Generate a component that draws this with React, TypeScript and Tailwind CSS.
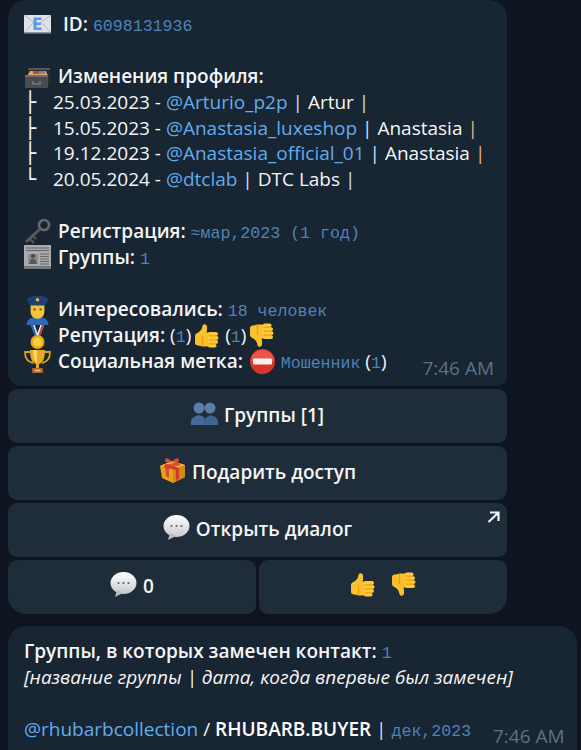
import type { ReactNode } from "react";

function Emoji({ children, className = "" }: { children: ReactNode; className?: string }) {
  return (
    <svg viewBox="0 0 27 27" className={`inline-block w-[27px] h-[27px] shrink-0 align-middle -mt-[3px] ${className}`}>
      {children}
    </svg>
  );
}

const Envelope = () => (
  <Emoji>
    <rect x="0" y="4" width="27" height="18" fill="#dfe3e8" />
    <path d="M0 4l13.500 10L27 4M0 22l9-10M27 22l-9-10" fill="none" stroke="#aeb6be" strokeWidth="1" />
    <rect x="0" y="21" width="27" height="1.500" fill="#8f979f" />
    <path d="M9.500 6.500h8v2.500h-5v2.500h4.500v2.500h-4.500V16.500h5V19h-8z" fill="#5b9be8" />
  </Emoji>
);

const Cabinet = () => (
  <Emoji>
    <path d="M4 5h22v15l-3 4V9H4z" fill="#2b2c30" />
    <path d="M4 5h22v2H4z" fill="#55565b" />
    <path d="M3 13l3-5h16l2 5z" fill="#e0a860" />
    <path d="M9 8h6v3H9z" fill="#c6493c" />
    <path d="M15 8h6v3h-6z" fill="#6a8bb0" />
    <rect x="1" y="12" width="23" height="13" rx="1" fill="#4a4b50" />
    <rect x="1" y="12" width="23" height="2" fill="#6c6d72" />
    <path d="M9 18v3h7v-3" fill="none" stroke="#86878c" strokeWidth="1.200" />
  </Emoji>
);

const Key = () => (
  <Emoji>
    <circle cx="20" cy="7" r="5" fill="none" stroke="#6b6a68" strokeWidth="2.600" />
    <path d="M16 11L2 24" stroke="#5b5a58" strokeWidth="3" />
    <path d="M6 21l4 4M9 18l3 3" stroke="#55544f" strokeWidth="2.400" />
  </Emoji>
);

const Newspaper = () => (
  <Emoji>
    <rect x="0" y="1" width="27" height="24" fill="#a9abad" />
    <rect x="0" y="22" width="27" height="3" fill="#77797b" />
    <path d="M2 4h23M2 6.500h23" stroke="#5f6163" strokeWidth="1.200" />
    <rect x="4" y="10" width="10" height="10" fill="#8b8d8f" />
    <circle cx="9" cy="12" r="2.200" fill="#4b4d4f" />
    <path d="M5 20l2-5h4l2 5z" fill="#55575a" />
    <path d="M16 10h9M16 12.500h9M16 15h9M16 17.500h9M16 20h9" stroke="#66686a" strokeWidth="1" />
  </Emoji>
);

const Police = () => (
  <Emoji className="scale-[1.15]">
    <path d="M4 27c0-5 4-7 9.500-7s9.500 2 9.500 7z" fill="#2f6ab0" />
    <path d="M7.500 8h12v7c0 4-2.500 6.500-6 6.500s-6-2.500-6-6.500z" fill="#f6c43a" />
    <path d="M4 5c3-4 16-5 19 0l-3 5H7z" fill="#1d3f78" />
    <circle cx="13.500" cy="5" r="1.500" fill="#e7b93a" />
    <rect x="10" y="12.500" width="1.800" height="1.800" fill="#6a4a10" />
    <rect x="15.300" y="12.500" width="1.800" height="1.800" fill="#6a4a10" />
  </Emoji>
);

const Medal = () => (
  <Emoji>
    <path d="M6 1l6 15h3L21 1h-4l-3.500 10L10 1z" fill="#e9edf0" />
    <path d="M6 1l6 15h1.500L8.500 1z" fill="#2e5ea8" />
    <path d="M21 1l-6 15h-1.500L18.500 1z" fill="#cf3a34" />
    <circle cx="13.500" cy="20" r="7" fill="#e7aa17" />
    <circle cx="13.500" cy="20" r="4.500" fill="#f8cd43" />
  </Emoji>
);

const Trophy = () => (
  <Emoji>
    <path d="M6 4H1c0 7 3 10 8 11M21 4h5c0 7-3 10-8 11" fill="none" stroke="#d6a020" strokeWidth="1.800" />
    <path d="M6 2h15c0 8-2 13-6 14v4h-3v-4C8 15 6 10 6 2z" fill="#e8aa26" />
    <path d="M9 2h4v13c-3-2-4-7-4-13z" fill="#f9d565" />
    <rect x="8" y="20" width="11" height="5" rx="1" fill="#a9632d" />
    <rect x="10.500" y="21.500" width="6" height="2" fill="#e8b66a" />
  </Emoji>
);

const thumb = (
  <>
    <path d="M2 14c0-2 1.500-2.500 4-4 2-1.500 3-3 3.500-6 .3-2.500 4-2.500 4.500.5.300 2 0 4-.5 6H22c2 0 2.500 13-.5 14H10c-2 0-3-1-5-1-2 0-3-1-3-3z" fill="#fbc02d" />
    <path d="M9 14c1 3 1 7 0 10" fill="none" stroke="#f09a0b" strokeWidth="1.200" />
    <rect x="15" y="10" width="10" height="3.800" rx="1.900" fill="#ffca3a" />
    <rect x="15" y="14" width="10.500" height="3.800" rx="1.900" fill="#ffca3a" />
    <rect x="15" y="18" width="10" height="3.800" rx="1.900" fill="#ffca3a" />
    <rect x="15" y="22" width="8.500" height="3.600" rx="1.800" fill="#ffca3a" />
    <path d="M16 13.900h8M16 17.900h8M16 21.900h7" stroke="#e58e00" strokeWidth=".9" />
  </>
);

const ThumbUp = ({ className = "" }: { className?: string }) => <Emoji className={className}>{thumb}</Emoji>;
const ThumbDown = ({ className = "" }: { className?: string }) => (
  <Emoji className={className}>
    <g transform="matrix(1 0 0 -1 0 27)">{thumb}</g>
  </Emoji>
);

const NoEntry = () => (
  <Emoji className="ml-[1px]">
    <circle cx="13.500" cy="13.500" r="12.500" fill="#d9362b" />
    <path d="M2 13.500a11.500 11.500 0 0 1 23 0z" fill="#e8574a" />
    <rect x="4" y="10.500" width="19" height="6" rx="1" fill="#f3f0ee" />
  </Emoji>
);

const People = () => (
  <Emoji>
    <circle cx="8" cy="8" r="5.500" fill="#5a7ea8" />
    <path d="M0 25v-3c0-4 3-5 5-6l3-1 3 1c2 1 3 2 3 6v3z" fill="#44699a" />
    <circle cx="19" cy="8" r="5.500" fill="#5a7ea8" />
    <path d="M13 25v-3c0-4 3-5 5-6l1-1 3 1c2 1 5 2 5 6v3z" fill="#3f6493" />
  </Emoji>
);

const Gift = () => (
  <Emoji>
    <path d="M1 9l12-5 13 4v12L14 26 3 21z" fill="#e6a115" />
    <path d="M14 12v14l12-6V8z" fill="#cf8a12" />
    <path d="M1 9l13 3 12-4-13-4z" fill="#f4bb3a" />
    <path d="M7 7l13 4v11l-3 2V13L4 10z" fill="#cf3b2e" />
    <path d="M19 5l-13 3 1 11 3 2V11l12-3z" fill="#d8402f" opacity=".85" />
    <path d="M13 5C10 1 6 0 6 3s4 3 7 2c3 1 7 1 7-2s-4-2-7 2z" fill="#e2473a" />
  </Emoji>
);

const Bubble = () => (
  <Emoji>
    <defs>
      <linearGradient id="bubblefill" x1="0" y1="0" x2="0" y2="1">
        <stop offset="0" stopColor="#ffffff" />
        <stop offset="1" stopColor="#c6cacd" />
      </linearGradient>
    </defs>
    <ellipse cx="13.500" cy="12" rx="13" ry="11" fill="url(#bubblefill)" />
    <path d="M7 19l-2 7 8-4z" fill="#b9bdc0" />
    <circle cx="8.500" cy="12" r="1.100" fill="#62666a" />
    <circle cx="13.500" cy="12" r="1.100" fill="#62666a" />
    <circle cx="18.500" cy="12" r="1.100" fill="#62666a" />
  </Emoji>
);

const Link = ({ children }: { children: ReactNode }) => <span className="text-[#62acec]">{children}</span>;

const Code = ({ children }: { children: ReactNode }) => (
  <span className="font-['Liberation_Mono',monospace] text-[16.6px] text-[#4f83b8]">{children}</span>
);

const Label = ({ children, className = "ml-[7px]" }: { children: ReactNode; className?: string }) => (
  <span className={`font-semibold ${className}`}>{children}</span>
);

const Line = ({ children }: { children?: ReactNode }) => <div className="h-[25.9px] whitespace-nowrap">{children}</div>;

const Time = ({ className }: { className: string }) => (
  <span className={`absolute leading-[26px] text-[#5d7185] ${className}`}>7:46 AM</span>
);

function History({ mark, date, nick, name, tail = "text-[#cfe2f5]" }: { mark: string; date: string; nick: string; name: string; tail?: string }) {
  return (
    <Line>
      <span className="inline-block w-[29px] font-['DejaVu_Sans',sans-serif] text-[20px]">{mark}</span>
      {date} - <Link>{nick}</Link> <span className="text-[#cfe2f5]">|</span> {name} <span className={tail}>|</span>
    </Line>
  );
}

function Button({ children, className = "" }: { children: ReactNode; className?: string }) {
  return (
    <div className={`relative flex flex-1 h-[54px] items-center justify-center gap-[6px] bg-[#1f2c3a] pb-[3px] font-semibold rounded-[9px] ${className}`}>
      {children}
    </div>
  );
}

export default function App() {
  return (
    <div className="h-[750px] overflow-hidden bg-[#0e1520] px-[8px] font-['Open_Sans',sans-serif] text-[19px] leading-[26px] text-[#f5f5f5]">
      <div className="relative w-[499px] h-[386px] rounded-t-[18px] rounded-b-[9px] rounded-bl-[14px] bg-[#182533] px-[16px] pt-[11px]">
        <Line>
          <Envelope />
          <Label className="ml-[12px]">ID:</Label> <Code>6098131936</Code>
        </Line>
        <Line />
        <Line>
          <Cabinet />
          <Label>Изменения профиля:</Label>
        </Line>
        <History mark="├" date="25.03.2023" nick="@Arturio_p2p" name="Artur" />
        <History mark="├" date="15.05.2023" nick="@Anastasia_luxeshop" name="Anastasia" tail="text-[#f0b080]" />
        <History mark="├" date="19.12.2023" nick="@Anastasia_official_01" name="Anastasia" tail="text-[#f0b080]" />
        <History mark="└" date="20.05.2024" nick="@dtclab" name="DTC Labs" />
        <Line />
        <Line>
          <Key />
          <Label>Регистрация:</Label> <Code>≈мар,2023 (1 год)</Code>
        </Line>
        <Line>
          <Newspaper />
          <Label>Группы:</Label> <Code>1</Code>
        </Line>
        <Line />
        <Line>
          <Police />
          <Label>Интересовались:</Label> <Code>18 человек</Code>
        </Line>
        <Line>
          <Medal />
          <Label>Репутация:</Label> (<Code>1</Code>)<ThumbUp className="ml-[2px]" /> (<Code>1</Code>)<ThumbDown className="ml-[2px]" />
        </Line>
        <Line>
          <Trophy />
          <Label>Социальная метка:</Label> <NoEntry /> <Code>Мошенник</Code> (<Code>1</Code>)
        </Line>
        <Time className="right-[13px] bottom-[5px]" />
      </div>

      <div className="mt-[3px] flex w-[499px] flex-col gap-[3px]">
        <Button className="flex-none">
          <People />
          <span>Группы [1]</span>
        </Button>
        <Button className="flex-none">
          <Gift />
          <span>Подарить доступ</span>
        </Button>
        <Button className="flex-none">
          <Bubble />
          <span>Открыть диалог</span>
          <svg viewBox="0 0 13 12" className="absolute right-[7px] top-[8px] h-[12px] w-[13px]">
            <path d="M3 1.500h8.500V10M11 2L1.500 11" fill="none" stroke="#f0f2f4" strokeWidth="2.200" />
          </svg>
        </Button>
        <div className="flex gap-[3px]">
          <Button className="rounded-bl-[18px]">
            <Bubble />
            <span>0</span>
          </Button>
          <Button className="rounded-br-[18px] gap-[14px]">
            <ThumbUp />
            <ThumbDown />
          </Button>
        </div>
      </div>

      <div className="relative mt-[12px] w-[569px] h-[140px] rounded-[18px] bg-[#182533] px-[16px] pt-[12px]">
        <Line>
          <Label className="">Группы, в которых замечен контакт:</Label> <Code>1</Code>
        </Line>
        <Line>
          <span className="italic">[название группы | дата, когда впервые был замечен]</span>
        </Line>
        <Line />
        <Line>
          <Link>@rhubarbcollection</Link> / <Label className="text-white">RHUBARB.BUYER</Label> <span className="text-[#cfe2f5]">|</span> <Code>дек,2023</Code>
        </Line>
        <Time className="left-[485px] top-[97px]" />
      </div>
    </div>
  );
}
